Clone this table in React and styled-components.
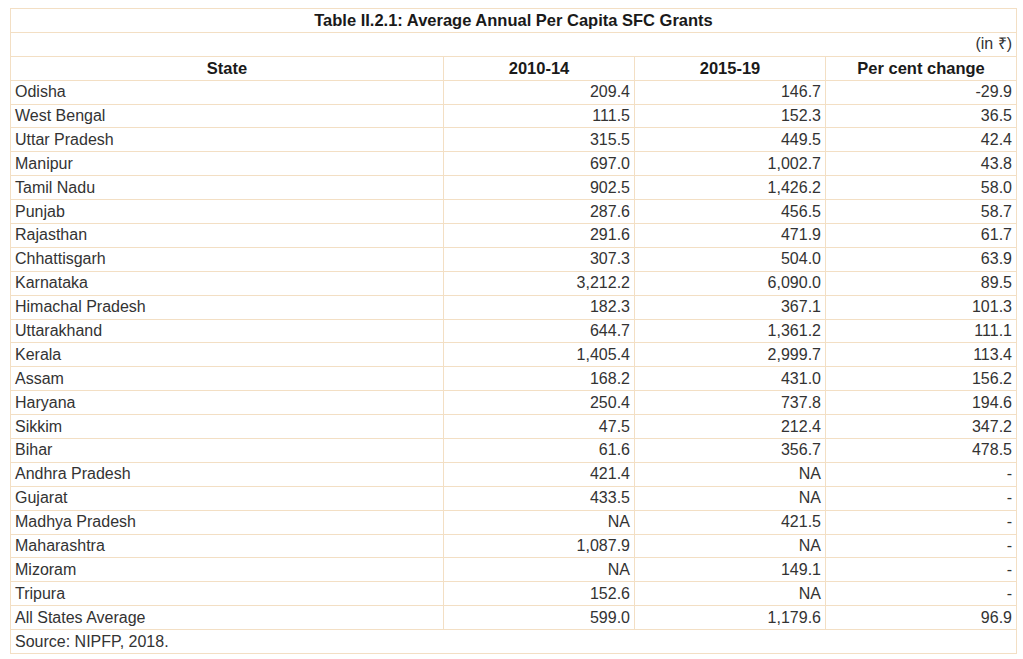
import React from "react";
import styled, { createGlobalStyle } from "styled-components";

const Global = createGlobalStyle`
  html, body { margin: 0; padding: 0; background: #fff; }
  body { font-family: "Liberation Sans", Arial, sans-serif; color: #333; }
`;

const Wrap = styled.div`
  padding: 8px 0 0 10px;
`;

const Table = styled.table`
  border-collapse: collapse;
  table-layout: fixed;
  width: 1006px;
  font-family: "Liberation Sans", Arial, sans-serif;
  font-size: 16px;
  color: #333;
`;

const Cell = styled.td`
  border: 1px solid #f3dfc4;
  height: 22.9px;
  padding: 0 4px 0 4px;
  line-height: 18px;
  text-align: ${(p) => p.$align || "left"};
  font-weight: ${(p) => (p.$bold ? "bold" : "normal")};
  font-size: ${(p) => (p.$bold ? "16.5px" : "16px")};
  color: ${(p) => (p.$bold ? "#1a1a1a" : "#333")};
  white-space: nowrap;
  vertical-align: middle;
`;

const rows = [
  ["Odisha", "209.4", "146.7", "-29.9"],
  ["West Bengal", "111.5", "152.3", "36.5"],
  ["Uttar Pradesh", "315.5", "449.5", "42.4"],
  ["Manipur", "697.0", "1,002.7", "43.8"],
  ["Tamil Nadu", "902.5", "1,426.2", "58.0"],
  ["Punjab", "287.6", "456.5", "58.7"],
  ["Rajasthan", "291.6", "471.9", "61.7"],
  ["Chhattisgarh", "307.3", "504.0", "63.9"],
  ["Karnataka", "3,212.2", "6,090.0", "89.5"],
  ["Himachal Pradesh", "182.3", "367.1", "101.3"],
  ["Uttarakhand", "644.7", "1,361.2", "111.1"],
  ["Kerala", "1,405.4", "2,999.7", "113.4"],
  ["Assam", "168.2", "431.0", "156.2"],
  ["Haryana", "250.4", "737.8", "194.6"],
  ["Sikkim", "47.5", "212.4", "347.2"],
  ["Bihar", "61.6", "356.7", "478.5"],
  ["Andhra Pradesh", "421.4", "NA", "-"],
  ["Gujarat", "433.5", "NA", "-"],
  ["Madhya Pradesh", "NA", "421.5", "-"],
  ["Maharashtra", "1,087.9", "NA", "-"],
  ["Mizoram", "NA", "149.1", "-"],
  ["Tripura", "152.6", "NA", "-"],
  ["All States Average", "599.0", "1,179.6", "96.9"],
];

export default function App() {
  return (
    <>
      <Global />
      <Wrap>
        <Table>
          <colgroup>
            <col style={{ width: 433 }} />
            <col style={{ width: 191 }} />
            <col style={{ width: 191 }} />
            <col style={{ width: 191 }} />
          </colgroup>
          <tbody>
            <tr>
              <Cell colSpan={4} $align="center" $bold>
                Table II.2.1: Average Annual Per Capita SFC Grants
              </Cell>
            </tr>
            <tr>
              <Cell colSpan={4} $align="right">(in ₹)</Cell>
            </tr>
            <tr>
              <Cell $align="center" $bold>State</Cell>
              <Cell $align="center" $bold>2010-14</Cell>
              <Cell $align="center" $bold>2015-19</Cell>
              <Cell $align="center" $bold>Per cent change</Cell>
            </tr>
            {rows.map((r) => (
              <tr key={r[0]}>
                <Cell>{r[0]}</Cell>
                <Cell $align="right">{r[1]}</Cell>
                <Cell $align="right">{r[2]}</Cell>
                <Cell $align="right">{r[3]}</Cell>
              </tr>
            ))}
            <tr>
              <Cell colSpan={4}>Source: NIPFP, 2018.</Cell>
            </tr>
          </tbody>
        </Table>
      </Wrap>
    </>
  );
}
